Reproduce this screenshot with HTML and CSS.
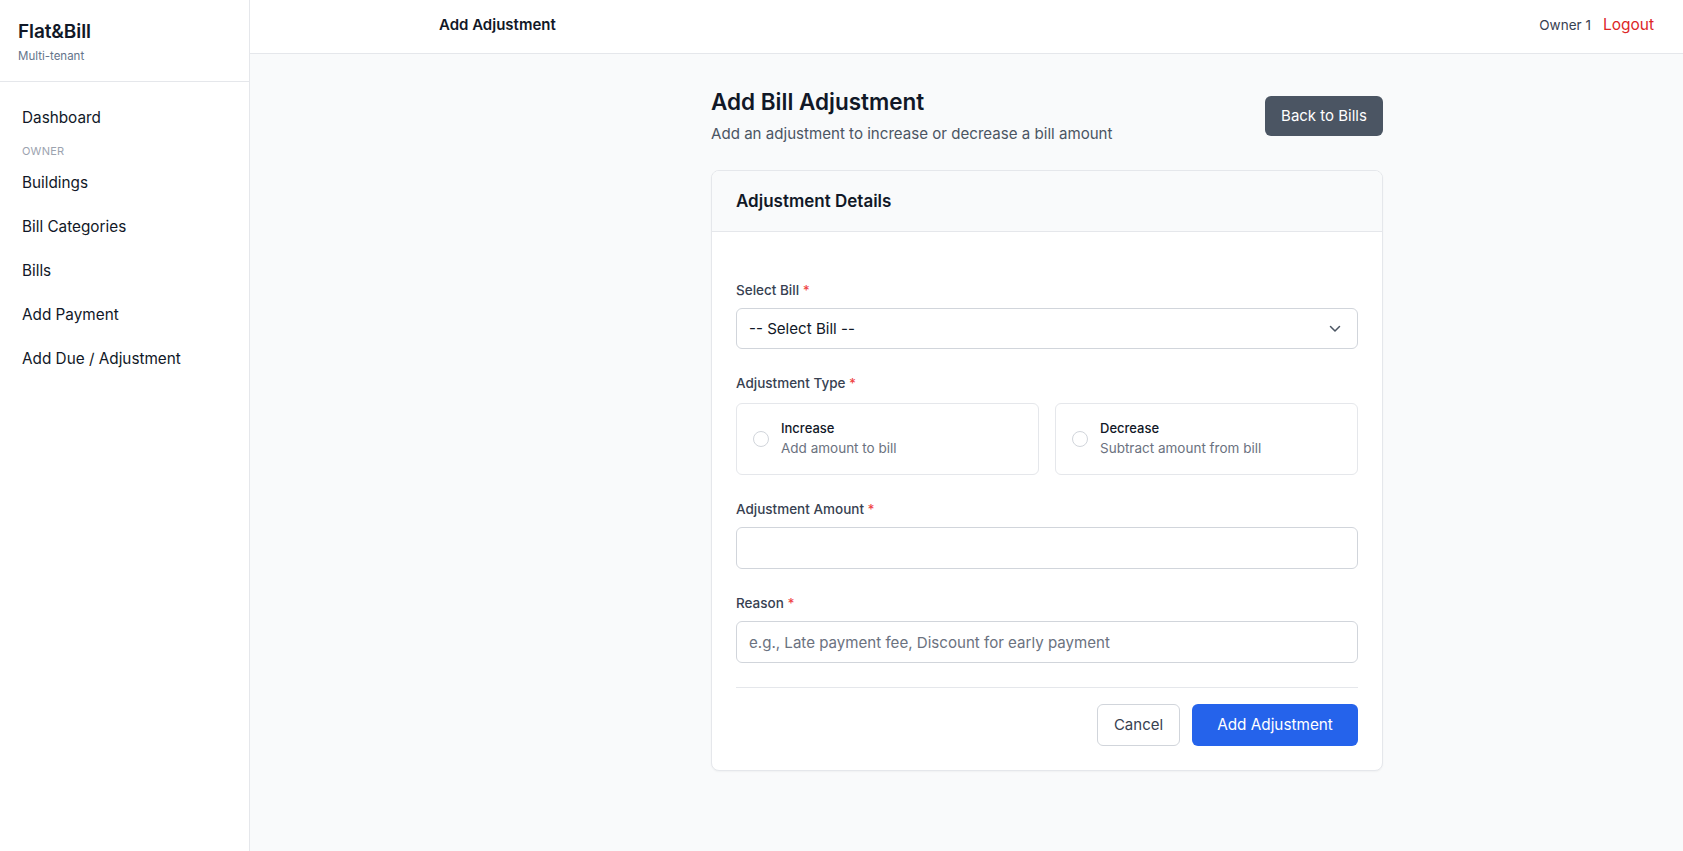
FILE: index.html
```html
<!DOCTYPE html>
<html lang="en">
<head>
<meta charset="utf-8">
<title>Add Adjustment</title>
<link rel="stylesheet" href="styles.css">
</head>
<body>
<div class="layout">
  <aside class="sidebar">
    <div class="brand">
      <div class="brand-name">Flat&amp;Bill</div>
      <div class="brand-sub">Multi-tenant</div>
    </div>
    <nav class="nav">
      <a class="nav-item">Dashboard</a>
      <div class="nav-section">OWNER</div>
      <a class="nav-item">Buildings</a>
      <a class="nav-item">Bill Categories</a>
      <a class="nav-item">Bills</a>
      <a class="nav-item">Add Payment</a>
      <a class="nav-item">Add Due / Adjustment</a>
    </nav>
  </aside>
  <div class="main">
    <header class="topbar">
      <div class="topbar-title">Add Adjustment</div>
      <div class="topbar-user">
        <span class="user-name">Owner 1</span>
        <a class="logout">Logout</a>
      </div>
    </header>
    <main class="content">
      <div class="form-wrap">
        <div class="page-head">
          <div>
            <h1 class="page-title">Add Bill Adjustment</h1>
            <p class="page-sub">Add an adjustment to increase or decrease a bill amount</p>
          </div>
          <button class="btn btn-dark">Back to Bills</button>
        </div>
        <div class="card">
          <div class="card-head">Adjustment Details</div>
          <div class="card-body">
            <div class="field">
              <label class="label">Select Bill <span class="req">*</span></label>
              <div class="select">
                <span>-- Select Bill --</span>
                <svg class="chev" width="12" height="8" viewBox="0 0 12 8"><path d="M1.5 1.5 L6 6 L10.5 1.5" fill="none" stroke="#4b5563" stroke-width="1.5" stroke-linecap="round" stroke-linejoin="round"/></svg>
              </div>
            </div>
            <div class="field">
              <label class="label label-radio">Adjustment Type <span class="req">*</span></label>
              <div class="radio-grid">
                <div class="radio-card">
                  <span class="radio"></span>
                  <div>
                    <div class="radio-title">Increase</div>
                    <div class="radio-sub">Add amount to bill</div>
                  </div>
                </div>
                <div class="radio-card">
                  <span class="radio"></span>
                  <div>
                    <div class="radio-title">Decrease</div>
                    <div class="radio-sub">Subtract amount from bill</div>
                  </div>
                </div>
              </div>
            </div>
            <div class="field">
              <label class="label">Adjustment Amount <span class="req">*</span></label>
              <div class="input"></div>
            </div>
            <div class="field">
              <label class="label">Reason <span class="req">*</span></label>
              <div class="input placeholder">e.g., Late payment fee, Discount for early payment</div>
            </div>
            <div class="actions">
              <button class="btn btn-outline">Cancel</button>
              <button class="btn btn-primary">Add Adjustment</button>
            </div>
          </div>
        </div>
      </div>
    </main>
  </div>
</div>
</body>
</html>
```
FILE: styles.css
```css
* { box-sizing: border-box; }
html, body { margin: 0; padding: 0; }
body {
  font-family: Inter, "Noto Sans", sans-serif;
  color: #111827;
  background: #f9fafb;
  height: 851px;
  overflow: hidden;
}
.layout { display: flex; height: 851px; }
.sidebar {
  width: 250px;
  flex: none;
  background: #fff;
  border-right: 1px solid #e5e7eb;
}
.brand {
  height: 82px;
  padding: 20px 18px 0;
  border-bottom: 1px solid #e5e7eb;
}
.brand-name { font-size: 19px; font-weight: 600; line-height: 24px; color: #111827; letter-spacing: -0.1px; }
.brand-sub { font-size: 11.5px; line-height: 16px; color: #64748b; margin-top: 4px; }
.nav { padding-top: 14px; display: flex; flex-direction: column; }
.nav-item {
  display: block;
  padding: 12px 22px;
  font-size: 15.3px;
  line-height: 20px;
  color: #111827;
}
.nav-section {
  padding: 4px 22px 3px;
  font-size: 11px;
  line-height: 14px;
  color: #9ca3af;
  letter-spacing: 0.2px;
}
.main { flex: 1; display: flex; flex-direction: column; min-width: 0; }
.topbar {
  height: 54px;
  background: #fff;
  border-bottom: 1px solid #e5e7eb;
  display: flex;
  align-items: center;
  justify-content: space-between;
  padding: 0 29px 0 189px;
  flex: none;
}
.topbar-title { font-size: 15px; font-weight: 600; color: #111827; margin-top: -4px; }
.topbar-user { display: flex; align-items: center; gap: 12px; margin-top: -4px; }
.user-name { font-size: 13.5px; color: #374151; }
.logout { font-size: 15.5px; color: #dc2626; }
.content { padding: 32px 0; }
.form-wrap { width: 672px; margin-left: 461px; }
.page-head { display: flex; justify-content: space-between; align-items: center; margin-bottom: 24px; }
.page-title { margin: 0; font-size: 22.5px; line-height: 32px; font-weight: 600; color: #111827; }
.page-sub { margin: 4px 0 0; font-size: 15.1px; line-height: 24px; color: #4b5563; }
.btn {
  font-family: inherit;
  font-size: 15px;
  line-height: 20px;
  border-radius: 6px;
  padding: 10px 16px;
  border: 1px solid transparent;
  cursor: pointer;
}
.btn-dark { background: #4b5563; color: #fff; width: 118px; height: 40px; padding: 0; }
.card {
  background: #fff;
  border: 1px solid #e5e7eb;
  border-radius: 8px;
  box-shadow: 0 1px 2px rgba(0,0,0,0.04);
  overflow: hidden;
}
.card-head {
  background: #f9fafb;
  border-bottom: 1px solid #e5e7eb;
  padding: 16px 24px;
  font-size: 17px;
  line-height: 28px;
  font-weight: 600;
  color: #111827;
}
.card-body { padding: 48px 24px 24px; display: flex; flex-direction: column; gap: 24px; }
.label { display: block; font-size: 13.5px; line-height: 20px; font-weight: 500; color: #374151; margin-bottom: 8px; }
.label-radio { margin-bottom: 10px; }
.req { color: #ef4444; }
.select, .input {
  height: 42px;
  border: 1px solid #d1d5db;
  border-radius: 6px;
  background: #fff;
  display: flex;
  align-items: center;
  padding: 0 12px;
  font-size: 15.1px;
  color: #111827;
}
.select { justify-content: space-between; padding-right: 16px; height: 41px; }
.placeholder { color: #6b7280; }
.radio-grid { display: grid; grid-template-columns: 1fr 1fr; gap: 16px; }
.radio-card {
  border: 1px solid #e5e7eb;
  border-radius: 6px;
  padding: 15px 16px 16px;
  display: flex;
  align-items: center;
  gap: 12px;
}
.radio {
  width: 16px; height: 16px;
  border: 1px solid #d1d5db;
  border-radius: 50%;
  background: #fff;
  flex: none;
}
.radio-title { font-size: 13px; line-height: 19px; font-weight: 500; color: #111827; }
.radio-sub { font-size: 13.5px; line-height: 20px; color: #6b7280; }
.actions {
  border-top: 1px solid #e5e7eb;
  padding-top: 16px;
  display: flex;
  justify-content: flex-end;
  gap: 12px;
}
.btn-outline { background: #fff; border-color: #d1d5db; color: #374151; height: 42px; width: 83px; padding: 0; }
.btn-primary { background: #2563eb; color: #fff; height: 42px; width: 166px; padding: 0; font-size: 15.3px; }
```
